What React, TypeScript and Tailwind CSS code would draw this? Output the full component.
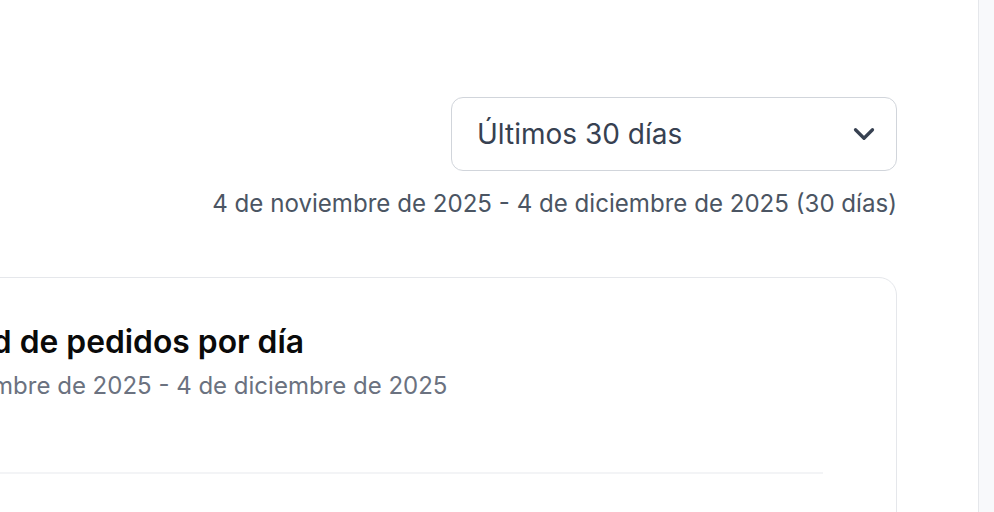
import { ChevronDown } from "lucide-react";

const font = { fontFamily: "Inter, 'Noto Sans', sans-serif" };

function RangeSelect() {
  return (
    <button className="flex h-[74px] w-[446px] items-center justify-between rounded-[12px] border-[1.5px] border-[#d1d5db] bg-white pl-[25px] pr-[15px] text-left">
      <span className="text-[28px] leading-[42px] text-[#374151]">Últimos 30 días</span>
      <ChevronDown size={34} strokeWidth={2.3} className="text-[#374151]" />
    </button>
  );
}

export default function App() {
  return (
    <div className="flex h-[512px] w-full overflow-hidden bg-white" style={font}>
      {/* main content */}
      <main className="min-w-0 flex-1 overflow-hidden pr-[81px] pt-[97px]">
        <div className="flex flex-col items-end">
          <RangeSelect />
          <p className="mt-[16px] whitespace-nowrap text-[24.1px] leading-[34px] text-[#4b5563]">
            4 de noviembre de 2025 - 4 de diciembre de 2025 (30 días)
          </p>
        </div>

        {/* chart card */}
        <section className="-ml-[164px] mt-[56px] h-[320px] rounded-[18px] border-[1.5px] border-[#e5e7eb] bg-white pl-[36px] pr-[73px] pt-[39px]">
          <h2 className="whitespace-nowrap text-[31.8px] font-semibold leading-[49px] text-[#0a0a0a]">
            Cantidad de pedidos por día
          </h2>
          <p className="mt-[2px] whitespace-nowrap text-[24px] leading-[35px] text-[#6b7280]">
            4 de noviembre de 2025 - 4 de diciembre de 2025
          </p>
          <div className="mt-[69px] h-[2px] bg-[#f3f4f6]" />
        </section>
      </main>

      {/* right edge panel */}
      <aside className="w-[16px] shrink-0 border-l-[1.5px] border-[#e5e7eb] bg-[#f8f9fb]" />
    </div>
  );
}
